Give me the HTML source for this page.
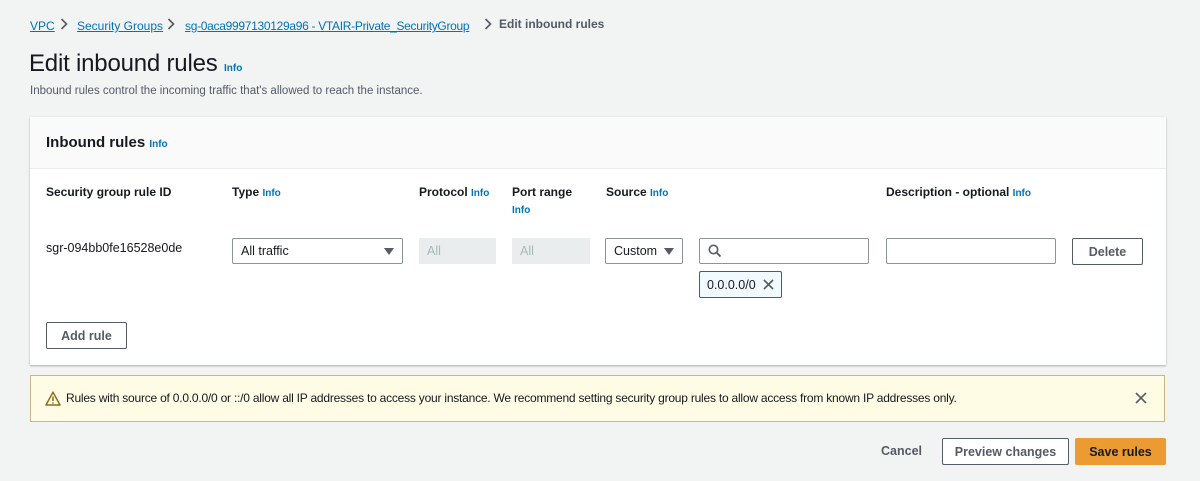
<!DOCTYPE html>
<html><head><style>
*{box-sizing:border-box;margin:0;padding:0}
body{width:1200px;height:481px;background:#f2f3f3;font-family:"Liberation Sans",sans-serif;color:#16191f;position:relative;overflow:hidden}
.a{position:absolute;white-space:nowrap}
.lnk{color:#0073bb;text-decoration:underline;font-size:12px}
.info{color:#0073bb;font-size:10px;font-weight:bold}
.h{font-size:12px;font-weight:bold}
.box{position:absolute;border:1px solid #8d9496;background:#fff;border-radius:2px;font-size:12.5px;padding-left:8px;display:flex;align-items:center;height:26px}
.dis{position:absolute;background:#eaeded;color:#aab7b8;font-size:12.5px;padding-left:8px;display:flex;align-items:center;height:26px}
.tri{position:absolute;width:0;height:0;border-left:5px solid transparent;border-right:5px solid transparent;border-top:7px solid #545b64}
.btn{position:absolute;border:1px solid #545b64;background:#fff;border-radius:2px;font-size:12.5px;font-weight:bold;color:#545b64;display:flex;align-items:center;justify-content:center;height:27px}
.chev{position:absolute;top:18px}
</style></head><body>
<div class="a" style="left:30px;top:17px"><span class="lnk">VPC</span></div>
<svg class="chev" style="left:60px" width="8" height="12" viewBox="0 0 8 12"><path d="M1.5 1L6.5 6L1.5 11" fill="none" stroke="#545b64" stroke-width="1.6"/></svg>
<div class="a" style="left:77px;top:17px"><span class="lnk">Security Groups</span></div>
<svg class="chev" style="left:167px" width="8" height="12" viewBox="0 0 8 12"><path d="M1.5 1L6.5 6L1.5 11" fill="none" stroke="#545b64" stroke-width="1.6"/></svg>
<div class="a" style="left:185px;top:17px"><span class="lnk" style="letter-spacing:-0.3px">sg-0aca9997130129a96 - VTAIR-Private_SecurityGroup</span></div>
<svg class="chev" style="left:484px" width="8" height="12" viewBox="0 0 8 12"><path d="M1.5 1L6.5 6L1.5 11" fill="none" stroke="#545b64" stroke-width="1.6"/></svg>
<div class="a" style="left:499px;top:17px;font-size:12px;font-weight:bold;color:#545b64">Edit inbound rules</div>
<div class="a" style="left:29px;top:50px;font-size:24px;letter-spacing:-0.2px">Edit inbound rules <span class="info" style="letter-spacing:0">Info</span></div>
<div class="a" style="left:30px;top:85px;font-size:11.5px;color:#545b64">Inbound rules control the incoming traffic that's allowed to reach the instance.</div>

<div class="a" style="left:30px;top:117px;width:1136px;height:248px;background:#fff;box-shadow:0 1px 2px rgba(0,28,36,.3)"></div>
<div class="a" style="left:30px;top:117px;width:1136px;height:52px;background:#fafafa;border-bottom:1px solid #eaeded"></div>
<div class="a" style="left:46px;top:134px;font-size:15px;font-weight:bold">Inbound rules <span class="info">Info</span></div>

<div class="a h" style="left:46px;top:185px">Security group rule ID</div>
<div class="a h" style="left:232px;top:185px">Type <span class="info">Info</span></div>
<div class="a h" style="left:419px;top:185px">Protocol <span class="info">Info</span></div>
<div class="a h" style="left:512px;top:185px">Port range</div>
<div class="a info" style="left:512px;top:205px">Info</div>
<div class="a h" style="left:606px;top:185px">Source <span class="info">Info</span></div>
<div class="a h" style="left:886px;top:185px">Description - optional <span class="info">Info</span></div>

<div class="a" style="left:46px;top:241px;font-size:12.5px">sgr-094bb0fe16528e0de</div>
<div class="box" style="left:232px;top:238px;width:171px">All traffic</div><div class="tri" style="left:384px;top:248px"></div>
<div class="dis" style="left:419px;top:238px;width:77px">All</div>
<div class="dis" style="left:512px;top:238px;width:78px">All</div>
<div class="box" style="left:605px;top:238px;width:78px">Custom</div><div class="tri" style="left:664px;top:248px"></div>
<div class="box" style="left:699px;top:238px;width:170px">
<svg width="14" height="14" viewBox="0 0 14 14"><circle cx="5.5" cy="5.5" r="4.2" fill="none" stroke="#545b64" stroke-width="1.6"/><path d="M8.6 8.6L12.5 12.5" stroke="#545b64" stroke-width="1.8"/></svg></div>
<div class="box" style="left:886px;top:238px;width:170px"></div>
<div class="btn" style="left:1072px;top:238px;width:71px">Delete</div>
<div class="a" style="left:699px;top:271px;width:83px;height:27px;border:1px solid #0073bb;background:#f1faff;border-radius:2px;font-size:12.5px;padding:6px 0 0 7px">0.0.0.0/0
<svg style="position:absolute;left:63px;top:7px" width="11" height="11" viewBox="0 0 11 11"><path d="M1 1L10 10M10 1L1 10" stroke="#545b64" stroke-width="1.6"/></svg></div>
<div class="btn" style="left:46px;top:322px;width:81px">Add rule</div>

<div class="a" style="left:30px;top:375px;width:1135px;height:47px;background:#fffce6;border:1px solid #c8b780"></div>
<svg class="a" style="left:45px;top:391px" width="16" height="15" viewBox="0 0 16 15"><path d="M8 1.2L15 14H1Z" fill="none" stroke="#8a6d1a" stroke-width="1.5" stroke-linejoin="round"/><path d="M8 5.5V10M8 11.3V12.6" stroke="#8a6d1a" stroke-width="1.5"/></svg>
<div class="a" style="left:66px;top:391px;font-size:12px;letter-spacing:-0.22px">Rules with source of 0.0.0.0/0 or ::/0 allow all IP addresses to access your instance. We recommend setting security group rules to allow access from known IP addresses only.</div>
<svg class="a" style="left:1135px;top:392px" width="12" height="12" viewBox="0 0 12 12"><path d="M1 1L11 11M11 1L1 11" stroke="#545b64" stroke-width="1.6"/></svg>

<div class="a" style="left:881px;top:444px;font-size:12.5px;font-weight:bold;color:#545b64">Cancel</div>
<div class="btn" style="left:942px;top:438px;width:127px">Preview changes</div>
<div class="btn" style="left:1075px;top:438px;width:91px;background:#ec9a32;border-color:#ec9a32;color:#16191f">Save rules</div>
</body></html>
